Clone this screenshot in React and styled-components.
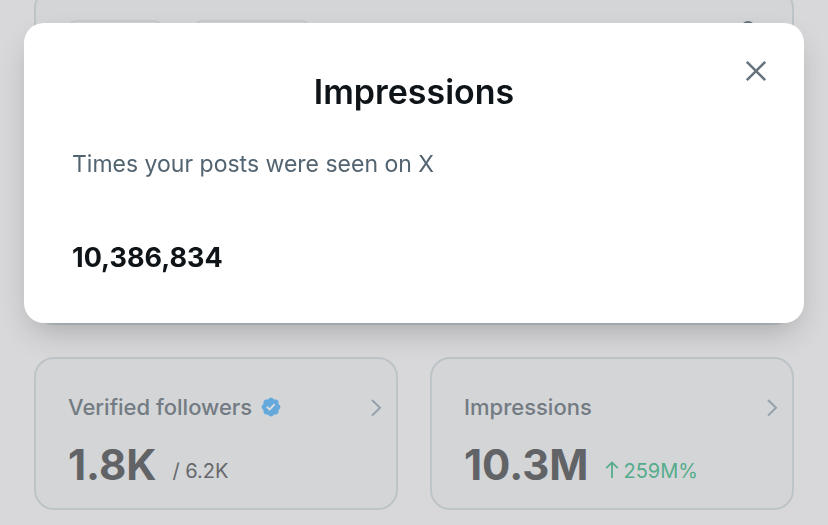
import React from "react";
import styled, { createGlobalStyle } from "styled-components";

const GlobalStyle = createGlobalStyle`
  *, *::before, *::after { box-sizing: border-box; }
  body {
    margin: 0;
    overflow: hidden;
    background: #d8d8da;
    font-family: Inter, "Liberation Sans", sans-serif;
  }
  h1, h2, p { margin: 0; }
`;

const Page = styled.main`
  display: grid;
  grid-template-columns: 1fr 1fr;
  gap: 32px;
  margin-top: -12px;
  padding: 0 34px;
`;

const Card = styled.section`
  min-width: 0;
  padding: 34px 13px 23px 32px;
  border: 2px solid #bdc4c8;
  border-radius: 20px;
  background: #d4d5d7;
`;

const ChartCard = styled(Card)`
  grid-column: 1 / -1;
  display: flex;
  gap: 32px;
  min-height: 337px;
  padding: 30px 32px;
`;

const Pill = styled.div`
  width: ${({ $wide }) => ($wide ? 116 : 94)}px;
  height: 40px;
  border: 2px solid #c8c9cb;
  border-radius: 8px;
`;

const PinIcon = styled.svg`
  margin-left: auto;
  color: #66727c;
`;

const CardHead = styled.div`
  display: flex;
  align-items: center;
  gap: 8px;
`;

const CardTitle = styled.h2`
  color: #737b83;
  font-size: 22px;
  font-weight: 500;
  line-height: 28px;
  white-space: nowrap;
`;

const CardLink = styled.a`
  display: flex;
  margin-left: auto;
  color: #94a1ac;
`;

const Figures = styled.div`
  display: flex;
  align-items: flex-end;
  gap: 16px;
  margin-top: 24px;
`;

const Total = styled.strong`
  color: #616366;
  font-size: 42px;
  font-weight: 700;
  line-height: 40px;
`;

const Detail = styled.span`
  color: ${({ $up }) => ($up ? "#55ac8b" : "#66686b")};
  font-size: 20px;
  line-height: 28px;
  white-space: nowrap;
`;

const UpArrow = styled.svg`
  margin-right: 5px;
`;

const Overlay = styled.div`
  position: fixed;
  inset: 0;
  padding: 23px 24px;
`;

const Dialog = styled.div`
  position: relative;
  padding: 45px 48px 47px;
  border-radius: 20px;
  background: #fff;
  box-shadow: 0 14px 32px -8px rgba(0, 0, 0, 0.24);
`;

const CloseButton = styled.button`
  position: absolute;
  top: 32px;
  right: 32px;
  display: flex;
  padding: 4px;
  border: 0;
  background: none;
  color: #66727c;
  cursor: pointer;
`;

const DialogTitle = styled.h1`
  color: #0f1419;
  font-size: 34px;
  font-weight: 600;
  line-height: 48px;
  text-align: center;
`;

const Description = styled.p`
  margin-top: 32px;
  color: #536471;
  font-size: 23px;
  line-height: 32px;
`;

const Value = styled.p`
  margin-top: 60px;
  color: #0f1419;
  font-size: 27px;
  font-weight: 700;
  line-height: 36px;
`;

function VerifiedBadge() {
  return (
    <svg width="22" height="22" viewBox="0 0 22 22" role="img" aria-label="Verified">
      <path
        fill="#65a9dc"
        d="M20.396 11c-.018-.646-.215-1.275-.57-1.816-.354-.54-.852-.972-1.438-1.246.223-.607.27-1.264.14-1.897-.131-.634-.437-1.218-.882-1.687-.47-.445-1.053-.75-1.687-.882-.633-.13-1.29-.083-1.897.14-.273-.587-.704-1.086-1.245-1.44S11.647 1.62 11 1.604c-.646.017-1.273.213-1.813.568s-.969.854-1.24 1.44c-.608-.223-1.267-.272-1.902-.14-.635.13-1.22.436-1.69.882-.445.47-.749 1.055-.878 1.688-.13.633-.08 1.29.144 1.896-.587.274-1.087.705-1.443 1.245-.356.54-.555 1.17-.574 1.817.02.647.218 1.276.574 1.817.356.54.856.972 1.443 1.245-.224.606-.274 1.263-.144 1.896.13.634.433 1.218.877 1.688.47.443 1.054.747 1.687.878.633.132 1.29.084 1.897-.136.274.586.705 1.084 1.246 1.439.54.354 1.17.551 1.816.569.647-.016 1.276-.213 1.817-.567s.972-.854 1.245-1.44c.604.239 1.266.296 1.903.164.636-.132 1.22-.447 1.68-.907.46-.46.776-1.044.908-1.681s.075-1.299-.165-1.903c.586-.274 1.084-.705 1.439-1.246.354-.54.551-1.17.569-1.816z"
      />
      <path fill="#dcdfe2" d="M9.662 14.85l-3.429-3.428 1.293-1.302 2.072 2.072 4.4-4.794 1.347 1.246z" />
    </svg>
  );
}

function MetricCard({ title, total, badge, children }) {
  return (
    <Card>
      <CardHead>
        <CardTitle>{title}</CardTitle>
        {badge}
        <CardLink href="#" aria-label={`${title} details`}>
          <svg width="14" height="20" viewBox="0 0 14 20" fill="none" stroke="currentColor" strokeWidth="2" aria-hidden="true">
            <path d="M3 3l8 7.8-8 7.8" />
          </svg>
        </CardLink>
      </CardHead>
      <Figures>
        <Total>{total}</Total>
        {children}
      </Figures>
    </Card>
  );
}

export default function App() {
  return (
    <>
      <GlobalStyle />
      <Page>
        <ChartCard>
          <Pill />
          <Pill $wide />
          <PinIcon width="24" height="24" viewBox="0 0 24 24" fill="none" stroke="currentColor" strokeWidth="2" aria-hidden="true">
            <circle cx="12" cy="8" r="6" />
          </PinIcon>
        </ChartCard>
        <MetricCard title="Verified followers" total="1.8K" badge={<VerifiedBadge />}>
          <Detail>/ 6.2K</Detail>
        </MetricCard>
        <MetricCard title="Impressions" total="10.3M">
          <Detail $up>
            <UpArrow width="14" height="17" viewBox="0 0 14 17" fill="none" stroke="currentColor" strokeWidth="1.8" aria-label="Up">
              <path d="M7 17V1.6M1.2 7.2L7 1.4l5.8 5.8" />
            </UpArrow>
            259M%
          </Detail>
        </MetricCard>
      </Page>
      <Overlay>
        <Dialog role="dialog" aria-modal="true" aria-labelledby="dialog-title">
          <CloseButton type="button" aria-label="Close">
            <svg width="24" height="24" viewBox="0 0 24 24" fill="none" stroke="currentColor" strokeWidth="2.6" aria-hidden="true">
              <path d="M2.8 2.8l18.4 18.4M21.2 2.8L2.8 21.2" />
            </svg>
          </CloseButton>
          <DialogTitle id="dialog-title">Impressions</DialogTitle>
          <Description>Times your posts were seen on X</Description>
          <Value>10,386,834</Value>
        </Dialog>
      </Overlay>
    </>
  );
}
